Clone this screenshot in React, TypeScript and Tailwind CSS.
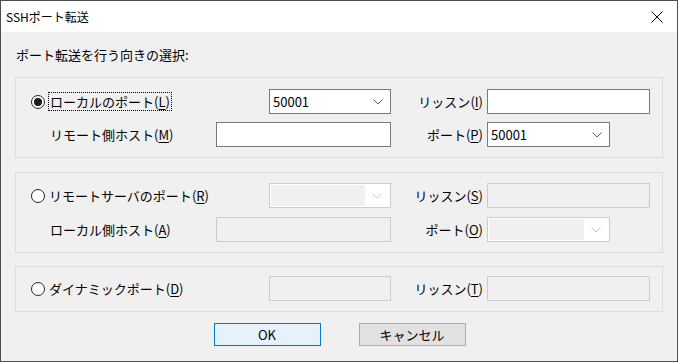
import React from "react";

const font = "font-['Noto_Sans_CJK_JP','Noto_Sans',sans-serif]";

function Chevron({ disabled }: { disabled?: boolean }) {
  return (
    <svg width="10" height="6" viewBox="0 0 10 6" className="shrink-0">
      <path
        d="M0.5 0.5 L5 5 L9.5 0.5"
        fill="none"
        stroke={disabled ? "#c8c8c8" : "#606060"}
        strokeWidth="1"
      />
    </svg>
  );
}

function Mn({ text, k }: { text: string; k: string }) {
  return (
    <>
      {text}(<u className="underline-offset-2">{k}</u>)
    </>
  );
}

function Radio({ checked }: { checked?: boolean }) {
  return (
    <span className="w-[14px] h-[14px] shrink-0 rounded-full border border-[#262626] bg-white flex items-center justify-center">
      {checked && <span className="w-[8px] h-[8px] rounded-full bg-[#1a1a1a]" />}
    </span>
  );
}

function Combo({ value, disabled, className }: { value?: string; disabled?: boolean; className: string }) {
  if (disabled) {
    return (
      <div className={`${className} h-[25px] border border-[#cccccc] bg-white flex p-[1px]`}>
        <div className="flex-1 bg-[#f0f0f0]" />
        <div className="w-[24px] flex items-center justify-center">
          <Chevron disabled />
        </div>
      </div>
    );
  }
  return (
    <div className={`${className} h-[25px] border border-[#7a7a7a] bg-white flex items-center pl-[3px] pr-[7px]`}>
      <span className="flex-1 text-[13px] leading-[16px]">{value}</span>
      <Chevron />
    </div>
  );
}

function Field({ disabled, className }: { disabled?: boolean; className: string }) {
  return (
    <div
      className={`${className} h-[25px] border ${disabled ? "border-[#cccccc] bg-[#f0f0f0]" : "border-[#7a7a7a] bg-white"}`}
    />
  );
}

function SideLabel({ children }: { children: React.ReactNode }) {
  return <div className="w-[96px] text-right pr-[4px] text-[13px] leading-[16px]">{children}</div>;
}

export default function App() {
  return (
    <div className={`w-[678px] h-[362px] border border-[#4d4d4d] bg-[#f0f0f0] flex flex-col text-black ${font}`}>
      {/* title bar */}
      <div className="h-[31px] bg-white flex items-center justify-between pl-[5px] pr-[14px]">
        <span className="text-[12px] leading-[16px]">SSHポート転送</span>
        <svg width="12" height="12" viewBox="0 0 12 12">
          <path d="M0.5 0.5 L11.5 11.5 M11.5 0.5 L0.5 11.5" stroke="#000" strokeWidth="1" />
        </svg>
      </div>

      <div className="flex-1 px-[14px] pt-[15px] flex flex-col">
        <div className="text-[13px] leading-[16px] pl-[1px]">ポート転送を行う向きの選択:</div>

        {/* local */}
        <div className="mt-[14px] border border-[#dcdcdc] pl-[15px] pt-[11px] pb-[10px] flex flex-col gap-[8px]">
          <div className="flex items-center">
            <div className="w-[238px] flex items-center gap-[3px]">
              <Radio checked />
              <span className="border border-dotted border-black px-[1px] text-[13px] leading-[17px]">
                <Mn text="ローカルのポート" k="L" />
              </span>
            </div>
            <Combo value="50001" className="w-[122px]" />
            <SideLabel>
              <Mn text="リッスン" k="I" />
            </SideLabel>
            <Field className="w-[163px]" />
          </div>
          <div className="flex items-center">
            <div className="w-[185px] pl-[19px] text-[13px] leading-[16px]">
              <Mn text="リモート側ホスト" k="M" />
            </div>
            <Field className="w-[175px]" />
            <SideLabel>
              <Mn text="ポート" k="P" />
            </SideLabel>
            <Combo value="50001" className="w-[123px]" />
          </div>
        </div>

        {/* remote */}
        <div className="mt-[14px] border border-[#dcdcdc] pl-[15px] pt-[10px] pb-[10px] flex flex-col gap-[9px]">
          <div className="flex items-center">
            <div className="w-[238px] flex items-center gap-[3px]">
              <Radio />
              <span className="text-[13px] leading-[17px] pl-[1px]">
                <Mn text="リモートサーバのポート" k="R" />
              </span>
            </div>
            <Combo disabled className="w-[122px]" />
            <SideLabel>
              <Mn text="リッスン" k="S" />
            </SideLabel>
            <Field disabled className="w-[163px]" />
          </div>
          <div className="flex items-center">
            <div className="w-[185px] pl-[19px] text-[13px] leading-[16px]">
              <Mn text="ローカル側ホスト" k="A" />
            </div>
            <Field disabled className="w-[175px]" />
            <SideLabel>
              <Mn text="ポート" k="O" />
            </SideLabel>
            <Combo disabled className="w-[123px]" />
          </div>
        </div>

        {/* dynamic */}
        <div className="mt-[13px] border border-[#dcdcdc] pl-[15px] pt-[9px] pb-[10px] flex items-center">
          <div className="w-[238px] flex items-center gap-[3px]">
            <Radio />
            <span className="text-[13px] leading-[17px] pl-[1px]">
              <Mn text="ダイナミックポート" k="D" />
            </span>
          </div>
          <Field disabled className="w-[122px]" />
          <SideLabel>
            <Mn text="リッスン" k="T" />
          </SideLabel>
          <Field disabled className="w-[163px]" />
        </div>

        {/* buttons */}
        <div className="mt-[11px] flex justify-center gap-[38px] pl-[1px]">
          <button className="w-[107px] h-[23px] border border-[#0078d7] bg-[#e5f1fb] text-[13px] leading-[16px]">
            OK
          </button>
          <button className="w-[107px] h-[23px] border border-[#adadad] bg-[#e1e1e1] text-[13px] leading-[16px]">
            キャンセル
          </button>
        </div>
      </div>
    </div>
  );
}
